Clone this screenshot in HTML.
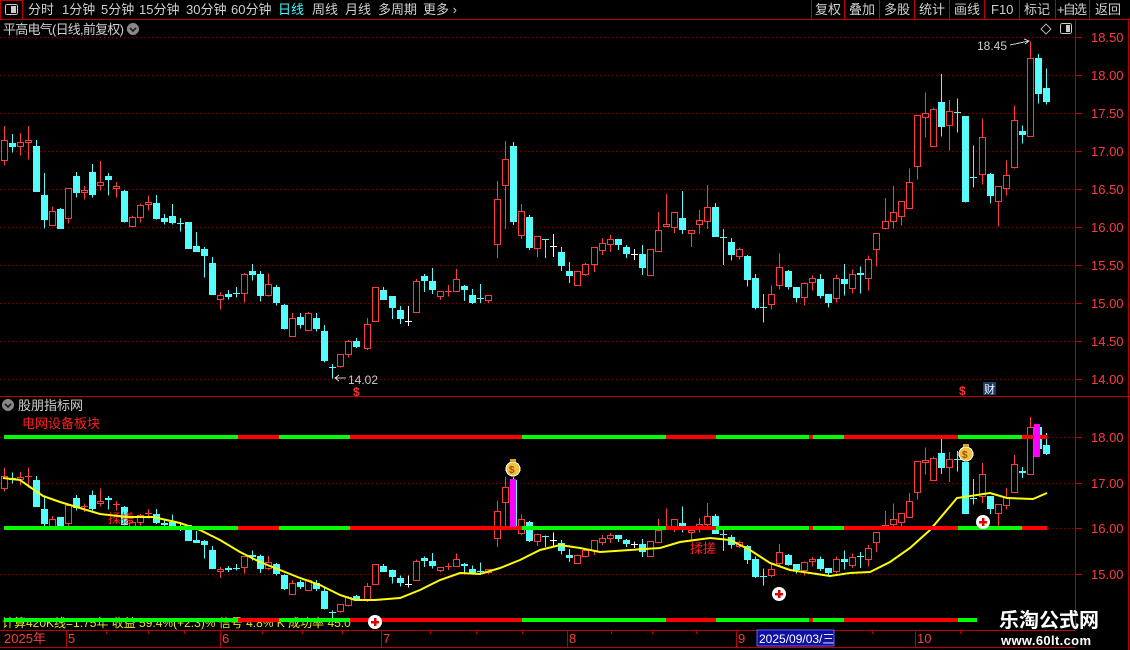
<!DOCTYPE html>
<html><head><meta charset="utf-8">
<style>
html,body{margin:0;padding:0;background:#000;width:1130px;height:650px;overflow:hidden}
svg{display:block}
text{font-family:"Liberation Sans","Noto Sans CJK SC",sans-serif}
</style></head>
<body>
<svg id="s" width="1130" height="650" viewBox="0 0 1130 650" xmlns="http://www.w3.org/2000/svg" shape-rendering="crispEdges">
<rect width="1130" height="650" fill="#000"/>
<line x1="0" y1="19.5" x2="1130" y2="19.5" stroke="#c00000"/>
<rect x="0.5" y="0.5" width="22" height="19" fill="none" stroke="#c00000"/>
<rect x="5.5" y="4.5" width="12" height="10" rx="2" fill="none" stroke="#ccc"/>
<rect x="11" y="6" width="5" height="7" fill="#ccc"/>
<g font-size="13" fill="#d0d0d0">
<text x="28" y="14">分时</text><text x="62" y="14">1分钟</text><text x="101" y="14">5分钟</text><text x="139" y="14">15分钟</text><text x="186" y="14">30分钟</text><text x="231" y="14">60分钟</text><text x="278" y="14" fill="#40ffff">日线</text><text x="312" y="14">周线</text><text x="345" y="14">月线</text><text x="378" y="14">多周期</text><text x="423" y="14">更多 ›</text>
</g>
<g stroke="#c00000"><line x1="811.5" y1="0" x2="811.5" y2="19"/><line x1="844.5" y1="0" x2="844.5" y2="19"/><line x1="879.5" y1="0" x2="879.5" y2="19"/><line x1="914.5" y1="0" x2="914.5" y2="19"/><line x1="949.5" y1="0" x2="949.5" y2="19"/><line x1="984.5" y1="0" x2="984.5" y2="19"/><line x1="1019.5" y1="0" x2="1019.5" y2="19"/><line x1="1055.5" y1="0" x2="1055.5" y2="19"/><line x1="1089.5" y1="0" x2="1089.5" y2="19"/></g>
<g font-size="13" fill="#d0d0d0">
<text x="815" y="14">复权</text><text x="849" y="14">叠加</text><text x="884" y="14">多股</text><text x="919" y="14">统计</text><text x="954" y="14">画线</text><text x="991" y="14">F10</text><text x="1024" y="14">标记</text><text x="1057" y="14" textLength="30">+自选</text><text x="1095" y="14">返回</text>
</g>
<text x="3" y="34" font-size="13" fill="#d0d0d0" textLength="121">平高电气(日线,前复权)</text>
<circle cx="133" cy="29" r="6" fill="#888"/><path d="M130 28 l3 3 l3 -3" stroke="#222" stroke-width="1.5" fill="none"/>
<path d="M1046 24 l5 5 l-5 5 l-5 -5z" fill="none" stroke="#aaa"/>
<rect x="1060.5" y="23.5" width="11" height="10" rx="2" fill="none" stroke="#ccc"/><rect x="1066" y="25" width="4" height="7" fill="#ccc"/>
<line x1="1075.5" y1="20" x2="1075.5" y2="630" stroke="#c00000"/>
<line x1="1128.5" y1="20" x2="1128.5" y2="650" stroke="#c00000"/>
<line x1="0" y1="396.5" x2="1130" y2="396.5" stroke="#c00000"/>
<line x1="0" y1="630.5" x2="1075" y2="630.5" stroke="#c00000"/>
<line x1="0" y1="647.5" x2="1075" y2="647.5" stroke="#c00000"/>
<g id="grid"></g>
<g font-size="13" fill="#ff3c3c" id="ax"></g>
<g id="top"></g>
<g id="low"></g>
<text x="977" y="50" font-size="12" fill="#ccc">18.45</text>
<path d="M1010 45 L1029 41 M1024 39 l5 2 l-4 3" stroke="#ccc" fill="none"/>
<text x="348" y="384" font-size="12" fill="#ccc">14.02</text>
<path d="M335 378 h11 M339 375 l-4 3 l4 3" stroke="#ccc" fill="none"/>
<text x="353" y="396" font-size="12" fill="#ff3030" font-weight="bold">$</text>
<text x="959" y="395" font-size="12" fill="#ff3030" font-weight="bold">$</text>
<rect x="983" y="382" width="13" height="13" fill="#1a3a6a"/><text x="984" y="393" font-size="11" fill="#fff">财</text>
<circle cx="8" cy="405" r="6" fill="#888"/><path d="M5 404 l3 3 l3 -3" stroke="#222" stroke-width="1.5" fill="none"/>
<text x="18" y="410" font-size="13" fill="#d0d0d0">股朋指标网</text>
<text x="22" y="428" font-size="13" fill="#ff2020">电网设备板块</text>
<text x="108" y="523" font-size="13" fill="#ff2020">揉搓</text>
<text x="690" y="553" font-size="13" fill="#ff2020">揉搓</text>
<text x="2" y="627" font-size="12" fill="#e8e020">计算420K线=1.75年 收益 59.4%(+2.3)% 信号 4.8% K 成功率 45.0</text>
<g id="lines"></g>
<g><ellipse cx="513" cy="469" rx="7" ry="7" fill="#f0c040" stroke="#fff"/><rect x="510" y="459" width="6" height="3" fill="#e0a020"/><text x="509" y="473" font-size="10" fill="#a05000" font-weight="bold">$</text></g>
<g><ellipse cx="966" cy="454" rx="7" ry="7" fill="#f0c040" stroke="#fff"/><rect x="963" y="444" width="6" height="3" fill="#e0a020"/><text x="962" y="458" font-size="10" fill="#a05000" font-weight="bold">$</text></g>
<rect x="510" y="479" width="6" height="48" fill="#ff00ff"/>
<rect x="1034" y="424" width="6" height="33" fill="#ff00ff"/>
<g id="plus"></g>
<g font-size="13" fill="#ff3c3c">
<text x="4" y="643">2025年</text><text x="68" y="643">5</text><text x="222" y="643">6</text><text x="383" y="643">7</text><text x="569" y="643">8</text><text x="738" y="643">9</text><text x="917" y="643">10</text>
</g>
<g stroke="#c00000"><line x1="66.5" y1="630" x2="66.5" y2="647"/><line x1="220.5" y1="630" x2="220.5" y2="647"/><line x1="381.5" y1="630" x2="381.5" y2="647"/><line x1="567.5" y1="630" x2="567.5" y2="647"/><line x1="736.5" y1="630" x2="736.5" y2="647"/><line x1="915.5" y1="630" x2="915.5" y2="647"/>
<line x1="106.5" y1="630" x2="106.5" y2="634"/><line x1="148.5" y1="630" x2="148.5" y2="634"/><line x1="184.5" y1="630" x2="184.5" y2="634"/><line x1="262.5" y1="630" x2="262.5" y2="634"/><line x1="302.5" y1="630" x2="302.5" y2="634"/><line x1="342.5" y1="630" x2="342.5" y2="634"/><line x1="430.5" y1="630" x2="430.5" y2="634"/><line x1="476.5" y1="630" x2="476.5" y2="634"/><line x1="522.5" y1="630" x2="522.5" y2="634"/><line x1="611.5" y1="630" x2="611.5" y2="634"/><line x1="652.5" y1="630" x2="652.5" y2="634"/><line x1="696.5" y1="630" x2="696.5" y2="634"/><line x1="872.5" y1="630" x2="872.5" y2="634"/><line x1="960.5" y1="630" x2="960.5" y2="634"/></g>
<rect x="757" y="630" width="77" height="16" fill="#1010a0" stroke="#6060ff"/>
<text x="759" y="643" font-size="12" fill="#fff">2025/09/03/三</text>
<text x="999" y="627" font-size="20" font-weight="bold" fill="#fff" textLength="100">乐淘公式网</text>
<text x="1001" y="645" font-size="13" font-weight="bold" fill="#fff" font-family="Liberation Serif,serif" textLength="90">www.60lt.com</text>
</svg>
<script>
const NS="http://www.w3.org/2000/svg";
function el(p,t,a){const e=document.createElementNS(NS,t);for(const k in a)e.setAttribute(k,a[k]);p.appendChild(e);return e;}
const grid=document.getElementById('grid'),ax=document.getElementById('ax');
const tl=["18.50","18.00","17.50","17.00","16.50","16.00","15.50","15.00","14.50","14.00"];
tl.forEach((t,i)=>{const y=37+38*i;el(grid,'line',{x1:0,y1:y+.5,x2:1075,y2:y+.5,stroke:'#8a0000','stroke-dasharray':'1 3'});el(grid,'line',{x1:1076,y1:y+.5,x2:1082,y2:y+.5,stroke:'#c00000'});const tx=el(ax,'text',{x:1091,y:y+5});tx.textContent=t;});
[["18.00",437],["17.00",483],["16.00",528],["15.00",574]].forEach(([t,y])=>{el(grid,'line',{x1:0,y1:y+.5,x2:1075,y2:y+.5,stroke:'#8a0000','stroke-dasharray':'1 3'});el(grid,'line',{x1:1076,y1:y+.5,x2:1082,y2:y+.5,stroke:'#c00000'});const tx=el(ax,'text',{x:1091,y:y+5});tx.textContent=t;});
const z7=[['r',91,152,48,167],['c',99,110,72,128],['r',97,109,69,137],['r',91,97,48,148],['c',108,245,90,245],['c',255,329,189,356],['r',304,347,289,347],['c',297,356,294,356],['r',235,326,235,341],['c',198,248,186,263],['r',240,247,228,269],['c',186,255,162,263],['r',216,226,153,242],['c',198,209,189,257],['r',229,235,216,263],['c',243,335,240,338],['r',322,350,316,350],['r',286,322,280,338],['r',277,284,256,302],['c',279,326,255,329],['c',323,335,312,344],['c',318,338,282,344],['c',340,340,324,365],['c',336,416,336,416],['c',408,425,366,425],['c',417,437,411,503],['c',459,554,441,554],['r',556,568,546,599],['c',551,560,540,569],['c',550,550,531,563],['r',492,548,489,578],['c',483,494,462,512],['c',492,557,483,575],['r',522,554,491,560],['c',531,579,525,587],['c',585,656,582,659],['r',624,677,609,677],['c',621,644,609,656],['r',609,659,606,659],['c',624,656,609,665],['c',663,752,645,757],['c',771,771,762,806],['r',732,767,732,773],['r',693,733,690,743],['c',692,710,684,714]];
const z8=[[22,'r',582,654,564,660],[46,'r',471,572,471,572],[70,'c',480,510,471,510],[97,'c',498,533,498,567],[121,'c',540,567,528,582],[145,'w',572,572,528,588],[169,'r',453,546,447,549],[193,'c',438,453,432,486],[217,'c',453,480,414,492],[241,'r',484,500,484,510],[265,'r',482,482,465,500],[289,'r',447,482,417,482],[313,'c',468,480,465,513],[337,'c',495,519,477,522],[361,'c',505,505,462,519],[385,'r',495,510,495,519],[412,'r',207,341,153,384],[436,'r',87,164,33,297],[460,'c',48,276,36,285],[484,'r',243,314,222,327],[508,'c',261,354,255,360],[532,'r',318,353,318,381],[556,'c',328,328,328,384],[580,'w',349,349,312,381],[604,'c',366,408,351,423],[628,'c',423,438,396,459],[652,'r',423,465,423,468],[676,'r',402,432,399,438],[703,'r',351,401,351,426],[727,'r',339,359,324,375],[751,'r',327,341,315,366],[775,'c',327,345,327,360],[799,'c',351,372,345,384],[823,'w',372,372,357,390],[847,'c',372,413,345,435],[871,'r',357,434,357,434],[895,'r',300,362,246,366],[919,'r',283,290,192,290],[943,'r',246,290,246,309],[967,'c',264,300,183,312],[993,'r',301,311,301,351],[1018,'r',270,281,240,312],[1042,'r',231,272,165,297],[1066,'c',231,321,219,321]];
const z9=[[10,'c',590,590,567,675],[34,'c',606,644,594,662],[58,'r',628,650,622,659],[82,'c',648,719,645,740],[106,'c',714,803,702,809],[130,'c',802,802,762,848],[154,'r',763,793,736,808],[178,'r',682,736,640,748],[204,'c',693,741,690,748],[228,'c',741,773,741,788],[252,'r',730,772,727,797],[276,'r',715,727,706,752],[300,'c',717,767,702,776],[324,'c',762,788,762,803],[348,'r',715,775,703,788],[372,'c',717,731,672,767],[397,'r',703,745,688,760],[421,'c',700,707,679,760],[445,'r',658,715,646,752],[469,'r',580,628,580,680],[495,'r',544,565,474,568],[519,'r',517,544,438,565],[543,'r',484,529,484,556],[567,'r',427,505,385,505],[592,'r',226,379,226,418],[616,'r',220,232,157,293],[640,'r',208,319,202,319],[664,'c',186,260,102,290],[688,'r',214,256,180,331],[712,'c',216,216,175,277],[736,'c',229,488,229,488],[760,'c',410,410,316,443],[787,'r',292,404,235,434],[811,'c',402,467,399,491],[835,'r',439,484,439,560],[859,'r',406,444,361,467],[883,'r',241,383,196,386],[907,'c',273,284,256,311],[931,'r',55,289,5,289],[955,'c',55,164,42,190],[979,'c',145,188,85,194]];
const C=[];
z7.forEach((d,i)=>C.push([4.3+8*i,d[0],110+d[1]/3,110+d[2]/3,110+d[3]/3,110+d[4]/3]));
z8.forEach(d=>C.push([360+d[0]/3,d[1],130+d[2]/3,130+d[3]/3,130+d[4]/3,130+d[5]/3]));
z9.forEach(d=>C.push([720+d[0]/3,d[1],40+d[2]/3,40+d[3]/3,40+d[4]/3,40+d[5]/3]));
const col={r:'#ff3c3c',c:'#54fcfc',w:'#ffffff'};
function draw(g,f){C.forEach(([x,t,bt,bb,wt,wb])=>{x=Math.round(x);const c=col[t];bt=f(bt);bb=f(bb);wt=f(wt);wb=f(wb);
 el(g,'line',{x1:x+.5,y1:wt,x2:x+.5,y2:wb,stroke:c});
 let h=bb-bt;
 if(h<1.5){el(g,'line',{x1:x-3,y1:Math.round(bt)+.5,x2:x+4,y2:Math.round(bt)+.5,stroke:c});}
 else if(t==='r'){el(g,'rect',{x:x-2.5,y:Math.round(bt)+.5,width:6,height:Math.round(h),fill:'#000',stroke:c});}
 else el(g,'rect',{x:x-3,y:Math.round(bt),width:7,height:Math.round(h),fill:c});
});}
draw(document.getElementById('top'),y=>y);
draw(document.getElementById('low'),y=>437+(y-75)*0.6);
const yp=[[3,478],[20,480],[30,487],[43,496],[60,502],[80,508],[100,514],[127,517],[153,517],[180,523],[200,530],[220,540],[240,552],[260,562],[280,570],[300,578],[320,585],[340,595],[355,600],[375,600],[400,598],[420,590],[440,580],[460,573],[480,574],[500,568],[520,560],[540,550],[560,545],[580,548],[600,552],[630,550],[660,548],[680,542],[710,538],[730,540],[750,550],[770,563],[790,570],[810,573],[830,576],[850,573],[870,572],[890,562],[910,548],[930,530],[957,498],[990,493],[1007,498],[1033,499],[1047,493]];
const lines=document.getElementById('lines');
el(lines,'polyline',{points:yp.map(p=>p.join(',')).join(' '),fill:'none',stroke:'#ffff00','stroke-width':2,'shape-rendering':'auto'});
const seg=[[4,238,'g'],[238,279,'r'],[279,350,'g'],[350,522,'r'],[522,666,'g'],[666,716,'r'],[716,809,'g'],[809,813,'r'],[813,844,'g'],[844,958,'r'],[958,1022,'g'],[1022,1047,'r']];
[437,528,620].forEach(y=>seg.forEach(([a,b,c])=>{if(y==620&&a>=958)return;el(lines,'rect',{x:a,y:y-2,width:b-a,height:4,fill:c=='g'?'#00ff00':'#ff0000'});}));
el(lines,'rect',{x:958,y:618,width:19,height:4,fill:'#00ff00'});
const pl=document.getElementById('plus');
[[779,594],[983,522],[375,622]].forEach(([x,y])=>{el(pl,'circle',{cx:x,cy:y,r:7,fill:'#fff','shape-rendering':'auto'});el(pl,'path',{d:`M${x-4} ${y}h8M${x} ${y-4}v8`,stroke:'#e00000','stroke-width':2.5});});
</script>
</body></html>
